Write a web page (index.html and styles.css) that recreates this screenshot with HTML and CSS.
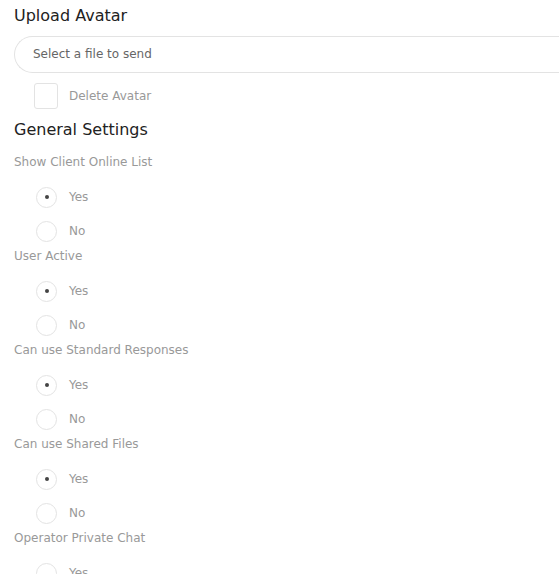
FILE: index.html
```html
<!DOCTYPE html>
<html>
<head>
<meta charset="utf-8">
<link rel="stylesheet" href="styles.css">
</head>
<body>
<div class="page">
  <h2 class="heading">Upload Avatar</h2>
  <div class="file-input">Select a file to send</div>
  <label class="check-row"><span class="checkbox"></span><span class="opt">Delete Avatar</span></label>
  <h2 class="heading settings">General Settings</h2>

  <div class="group">
    <div class="group-label">Show Client Online List</div>
    <div class="radio-row"><span class="radio checked"></span><span class="opt">Yes</span></div>
    <div class="radio-row"><span class="radio"></span><span class="opt">No</span></div>
  </div>
  <div class="group">
    <div class="group-label">User Active</div>
    <div class="radio-row"><span class="radio checked"></span><span class="opt">Yes</span></div>
    <div class="radio-row"><span class="radio"></span><span class="opt">No</span></div>
  </div>
  <div class="group">
    <div class="group-label">Can use Standard Responses</div>
    <div class="radio-row"><span class="radio checked"></span><span class="opt">Yes</span></div>
    <div class="radio-row"><span class="radio"></span><span class="opt">No</span></div>
  </div>
  <div class="group">
    <div class="group-label">Can use Shared Files</div>
    <div class="radio-row"><span class="radio checked"></span><span class="opt">Yes</span></div>
    <div class="radio-row"><span class="radio"></span><span class="opt">No</span></div>
  </div>
  <div class="group">
    <div class="group-label">Operator Private Chat</div>
    <div class="radio-row"><span class="radio"></span><span class="opt">Yes</span></div>
  </div>
</div>
</body>
</html>
```

FILE: styles.css
```css
html, body {
  margin: 0;
  padding: 0;
  background: #fff;
  overflow: hidden;
}
body {
  font-family: "DejaVu Sans", Verdana, sans-serif;
  width: 559px;
  height: 574px;
}
.page {
  padding: 1px 0 0 14px;
  display: flex;
  flex-direction: column;
  overflow: hidden;
  height: 573px;
}
.heading {
  margin: 0;
  font-weight: normal;
  font-size: 16px;
  color: #222;
  height: 30px;
  line-height: 30px;
  flex-shrink: 0;
}
.settings {
  margin-bottom: 9px;
}
.file-input {
  box-sizing: border-box;
  height: 37px;
  flex-shrink: 0;
  border: 1px solid #e3e3e3;
  border-right: none;
  border-radius: 19px 0 0 19px;
  padding-left: 18px;
  font-size: 12px;
  line-height: 35px;
  color: #666;
  margin-top: 5px;
}
.check-row {
  display: flex;
  align-items: center;
  height: 26px;
  flex-shrink: 0;
  margin: 10px 0 6px 20px;
}
.checkbox {
  box-sizing: border-box;
  width: 24px;
  height: 26px;
  border: 1px solid #e3e3e3;
  border-radius: 3px;
  margin-right: 11px;
}
.opt {
  font-size: 12px;
  color: #999;
}
.group {
  display: flex;
  flex-direction: column;
  flex-shrink: 0;
}
.group-label {
  font-size: 12px;
  color: #999;
  height: 16px;
  line-height: 16px;
  margin-bottom: 10px;
}
.radio-row {
  display: flex;
  align-items: center;
  height: 34px;
  padding-left: 22px;
}
.radio {
  box-sizing: border-box;
  width: 21px;
  height: 21px;
  border: 1px solid #e3e3e3;
  border-radius: 50%;
  margin-right: 12px;
  display: flex;
  align-items: center;
  justify-content: center;
}
.radio.checked::after {
  content: "";
  width: 4px;
  height: 4px;
  border-radius: 50%;
  background: #444;
}
```
